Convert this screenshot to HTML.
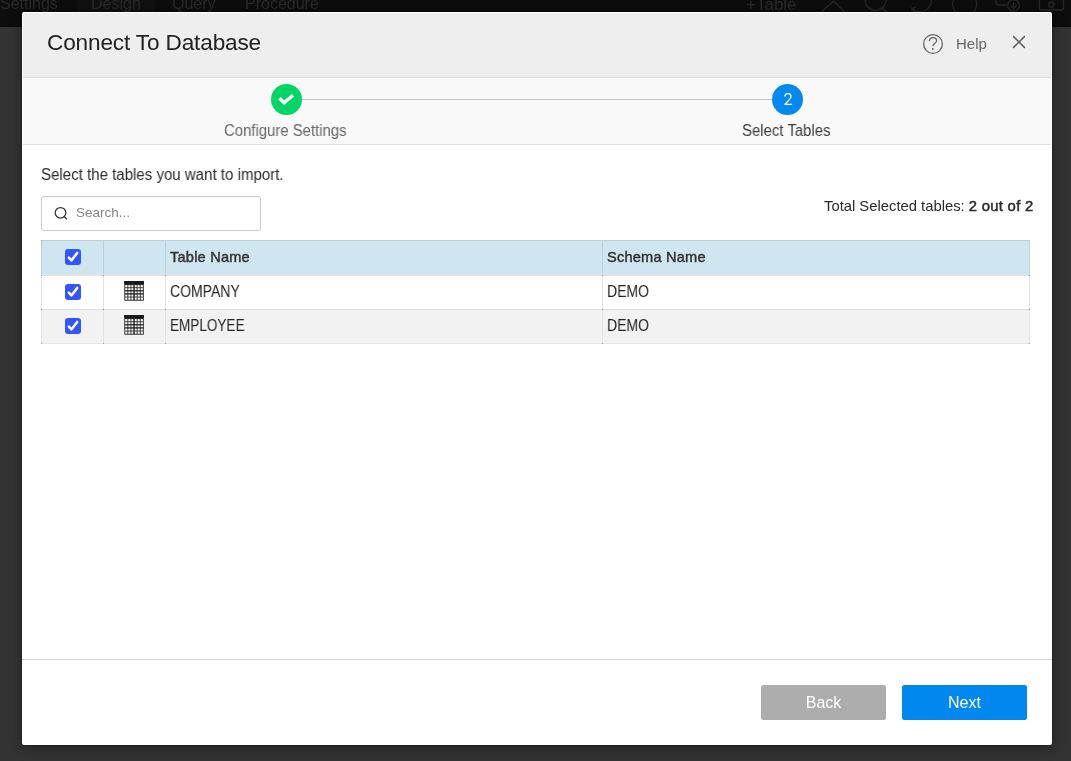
<!DOCTYPE html>
<html><head><meta charset="utf-8">
<style>
*{box-sizing:border-box;margin:0;padding:0}
html,body{width:1071px;height:761px;overflow:hidden;background:#333333;font-family:"Liberation Sans",sans-serif}
body{position:relative}
.a{position:absolute}
.t{position:absolute;white-space:nowrap;line-height:1;will-change:transform}
.tb{position:absolute;top:-4.5px;font-size:16px;line-height:1;color:#2a2a2a;white-space:nowrap}
.hl{position:absolute;height:1px}
.vl{position:absolute;width:1px}
.cb{position:absolute;width:16px;height:16px;background:#3356fc;border-radius:3px}
.cb svg{position:absolute;left:0;top:0}
.grid{position:absolute;width:21px;height:21px}
</style></head>
<body>
<!-- background app (dimmed) -->
<div class="a" style="left:0;top:0;width:1071px;height:27px;background:#0d0d0d"></div>
<div class="t tb" style="left:0px">Settings</div>
<div class="a" style="left:77px;top:0;width:78px;height:27px;background:#111"></div>
<div class="t tb" style="left:91px">Design</div>
<div class="t tb" style="left:172px">Query</div>
<div class="t tb" style="left:245px">Procedure</div>
<div class="t tb" style="left:746px;font-size:17px">+Table</div>

<svg class="a" style="left:800px;top:0" width="271" height="27" viewBox="800 0 271 27" fill="none" stroke="#282828" stroke-width="1.3">
  <path d="M821.6 11.8 L833.3 1.2 L844.8 11.8"/>
  <circle cx="875.5" cy="-0.3" r="10.6"/>
  <path d="M882.3 8.2 L888 12.5"/>
  <path d="M920 -11.5 A11.5 11.5 0 0 1 920 11.5 L913 11.5"/>
  <path d="M912 10 L915.5 6.5 M912 7 L912 10 L915 10"/>
  <path d="M955 -3 A12 12 0 1 0 975.5 -1"/>
  <path d="M996 0 L996 3 Q996 5 999 5 L1007 5"/>
  <circle cx="1013.5" cy="5.3" r="5.8"/>
  <path d="M1013.5 1.8 L1013.5 8.5 M1011 6 L1013.5 8.5 L1016 6"/>
  <path d="M1039.5 0 L1039.5 8 Q1039.5 10 1041.5 10 L1061.5 10 Q1063.5 10 1063.5 8 L1063.5 0"/>
  <circle cx="1051.3" cy="4.6" r="2.6"/>
</svg>
<!-- modal -->
<div class="a" style="left:22px;top:12px;width:1030px;height:733px;border-radius:2px;box-shadow:0 2px 14px rgba(0,0,0,.38),0 0 1px 1px rgba(0,0,0,.15)"></div>
<div class="a" style="left:22px;top:12px;width:1030px;height:733px;background:#ffffff;border-radius:2px"></div>
<!-- header -->
<div class="a" style="left:23px;top:13px;width:1028px;height:64px;background:#eeeeee"></div>
<div class="hl" style="left:23px;top:77px;width:1028px;background:#dcdcdc"></div>
<div class="t" style="left:47px;top:32.2px;font-size:22.6px;letter-spacing:-0.15px;color:#222">Connect To Database</div>
<svg class="a" style="left:922px;top:33.1px" width="22" height="22" viewBox="0 0 22 22">
  <circle cx="11" cy="11" r="9.4" fill="none" stroke="#666" stroke-width="1.3"/>
  <path d="M7.4 8.2 C7.4 5.9 9.1 4.6 11 4.6 C13 4.6 14.6 5.9 14.6 7.8 C14.6 9.9 12.1 10.3 11 12.4 L10.8 13.2" fill="none" stroke="#666" stroke-width="1.3"/>
  <circle cx="10.8" cy="16" r="0.95" fill="#666"/>
</svg>
<div class="t" style="left:955.5px;top:36.1px;font-size:15px;color:#666">Help</div>
<svg class="a" style="left:1012px;top:35px" width="14" height="14" viewBox="0 0 14 14">
  <path d="M1.6 1.6 L12.4 12.4 M12.4 1.6 L1.6 12.4" stroke="#5e5e5e" stroke-width="1.5" stroke-linecap="round"/>
</svg>

<!-- stepper -->
<div class="a" style="left:23px;top:78px;width:1028px;height:66px;background:#f9f9f9"></div>
<div class="hl" style="left:23px;top:144px;width:1028px;background:#e2e2e2"></div>
<div class="a" style="left:300px;top:99px;width:473px;height:1.2px;background:#c4c4c4"></div>
<div class="a" style="left:270.7px;top:83.9px;width:31.2px;height:31.2px;border-radius:50%;background:#00d665"></div>
<svg class="a" style="left:270.7px;top:83.9px" width="31.2" height="31.2" viewBox="0 0 31.2 31.2">
  <path d="M8.4 14.3 L13.2 18.8 L22 11.3" fill="none" stroke="#fff" stroke-width="3.4" stroke-linecap="butt" stroke-linejoin="miter"/>
</svg>
<div class="a" style="left:771.7px;top:83.9px;width:31.2px;height:31.2px;border-radius:50%;background:#0589ef"></div>
<svg class="a" style="left:771.7px;top:83.9px" width="31.2" height="31.2" viewBox="0 0 31.2 31.2"><path d="M12.9 12.4 C12.9 10.7 14.2 9.6 16 9.6 C17.8 9.6 19 10.7 19 12.4 C19 13.4 18.5 14.3 17.6 15.4 L13 20.3 L20.1 20.3" fill="none" stroke="#fff" stroke-width="1.25" stroke-linejoin="round"/></svg>
<div class="t" style="left:224.2px;top:122.7px;font-size:15.6px;color:#666;transform:scaleX(0.955);transform-origin:0 0">Configure Settings</div>
<div class="t" style="left:742.2px;top:122.7px;font-size:15.6px;color:#3c3c3c;transform:scaleX(0.957);transform-origin:0 0">Select Tables</div>

<!-- body -->
<div class="t" style="left:40.6px;top:166.9px;font-size:15.6px;color:#2a2a2a;transform:scaleX(0.965);transform-origin:0 0">Select the tables you want to import.</div>
<div class="a" style="left:41px;top:196px;width:220px;height:35px;border:1px solid #c9c9c9;border-radius:3px;background:#fff"></div>
<svg class="a" style="left:53px;top:205px" width="16" height="16" viewBox="0 0 16 16">
  <circle cx="7.5" cy="7.8" r="5.3" fill="none" stroke="#333" stroke-width="1.25"/>
  <path d="M11.4 11.7 L13.6 13.9" stroke="#333" stroke-width="1.3" stroke-linecap="round"/>
</svg>
<div class="t" style="left:75.8px;top:206.3px;font-size:13.5px;color:#858585">Search...</div>
<div class="t" style="right:38px;top:199.2px;font-size:14.8px;color:#2a2a2a">Total Selected tables: <span style="-webkit-text-stroke:0.5px #2a2a2a;letter-spacing:0.3px">2 out of 2</span></div>

<!-- table -->
<div class="a" style="left:41px;top:240px;width:989px;height:35px;background:#cfe5ef"></div>
<div class="a" style="left:41px;top:275px;width:989px;height:34px;background:#ffffff"></div>
<div class="a" style="left:41px;top:309px;width:989px;height:34px;background:#f2f2f2"></div>
<div class="hl" style="left:41px;top:240px;width:989px;background:#bccfd8"></div>
<div class="a" style="left:41px;top:274px;width:989px;height:2px;background:#e2e2e2"></div>
<div class="hl" style="left:41px;top:309px;width:989px;background:#dedede"></div>
<div class="hl" style="left:41px;top:343px;width:989px;background:#e2e2e2"></div>
<div class="vl" style="left:41px;top:240px;height:34px;background:#bdd0d9"></div>
<div class="vl" style="left:103px;top:240px;height:34px;background:#bdd0d9"></div>
<div class="vl" style="left:165px;top:240px;height:34px;background:#bdd0d9"></div>
<div class="vl" style="left:602px;top:240px;height:34px;background:#bdd0d9"></div>
<div class="vl" style="left:1029px;top:240px;height:34px;background:#bdd0d9"></div>
<div class="vl" style="left:41px;top:276px;height:68px;background:#e2e2e2"></div>
<div class="vl" style="left:103px;top:276px;height:68px;background:#e2e2e2"></div>
<div class="vl" style="left:165px;top:276px;height:68px;background:#e2e2e2"></div>
<div class="vl" style="left:602px;top:276px;height:68px;background:#e2e2e2"></div>
<div class="vl" style="left:1029px;top:276px;height:68px;background:#e2e2e2"></div>
<div class="a" style="left:41px;top:240px;width:1px;height:1px;background:#9fb2bb"></div>
<div class="a" style="left:41px;top:275px;width:1px;height:1px;background:#888"></div>
<div class="a" style="left:41px;top:309px;width:1px;height:1px;background:#888"></div>
<div class="a" style="left:41px;top:343px;width:1px;height:1px;background:#aaa"></div>
<div class="a" style="left:103px;top:275px;width:1px;height:1px;background:#888"></div>
<div class="a" style="left:103px;top:309px;width:1px;height:1px;background:#888"></div>
<div class="a" style="left:103px;top:343px;width:1px;height:1px;background:#aaa"></div>
<div class="a" style="left:165px;top:275px;width:1px;height:1px;background:#888"></div>
<div class="a" style="left:165px;top:309px;width:1px;height:1px;background:#888"></div>
<div class="a" style="left:165px;top:343px;width:1px;height:1px;background:#aaa"></div>
<div class="a" style="left:602px;top:275px;width:1px;height:1px;background:#888"></div>
<div class="a" style="left:602px;top:309px;width:1px;height:1px;background:#888"></div>
<div class="a" style="left:602px;top:343px;width:1px;height:1px;background:#aaa"></div>
<div class="a" style="left:1029px;top:275px;width:1px;height:1px;background:#888"></div>
<div class="a" style="left:1029px;top:309px;width:1px;height:1px;background:#888"></div>
<div class="a" style="left:1029px;top:343px;width:1px;height:1px;background:#aaa"></div>

<div class="cb" style="left:65px;top:249px"><svg width="16" height="16" viewBox="0 0 16 16"><path d="M3.9 8.7 L6.4 11.4 L12.2 3.9" fill="none" stroke="#fff" stroke-width="2.5" stroke-linecap="round" stroke-linejoin="round"/></svg></div>
<div class="cb" style="left:65px;top:284px"><svg width="16" height="16" viewBox="0 0 16 16"><path d="M3.9 8.7 L6.4 11.4 L12.2 3.9" fill="none" stroke="#fff" stroke-width="2.5" stroke-linecap="round" stroke-linejoin="round"/></svg></div>
<div class="cb" style="left:65px;top:318px"><svg width="16" height="16" viewBox="0 0 16 16"><path d="M3.9 8.7 L6.4 11.4 L12.2 3.9" fill="none" stroke="#fff" stroke-width="2.5" stroke-linecap="round" stroke-linejoin="round"/></svg></div>


<svg class="a" style="left:124.3px;top:280.5px" width="20.2" height="20" viewBox="0 0 20.2 20"><rect x="0" y="0" width="20.2" height="20" rx="1.3" fill="#808080"/><rect x="0.7" y="0" width="18.8" height="19.3" fill="#2e2e2e"/><rect x="0" y="0" width="20.2" height="3.3" rx="1" fill="#1a1a1a"/><g fill="#fff"><rect x="1.20" y="4.10" width="2.2" height="2.2"/><rect x="4.30" y="4.10" width="2.2" height="2.2"/><rect x="7.40" y="4.10" width="2.2" height="2.2"/><rect x="10.50" y="4.10" width="2.2" height="2.2"/><rect x="13.60" y="4.10" width="2.2" height="2.2"/><rect x="16.70" y="4.10" width="2.2" height="2.2"/><rect x="1.20" y="7.20" width="2.2" height="2.2"/><rect x="4.30" y="7.20" width="2.2" height="2.2"/><rect x="7.40" y="7.20" width="2.2" height="2.2"/><rect x="10.50" y="7.20" width="2.2" height="2.2"/><rect x="13.60" y="7.20" width="2.2" height="2.2"/><rect x="16.70" y="7.20" width="2.2" height="2.2"/><rect x="1.20" y="10.30" width="2.2" height="2.2"/><rect x="4.30" y="10.30" width="2.2" height="2.2"/><rect x="7.40" y="10.30" width="2.2" height="2.2"/><rect x="10.50" y="10.30" width="2.2" height="2.2"/><rect x="13.60" y="10.30" width="2.2" height="2.2"/><rect x="16.70" y="10.30" width="2.2" height="2.2"/><rect x="1.20" y="13.40" width="2.2" height="2.2"/><rect x="4.30" y="13.40" width="2.2" height="2.2"/><rect x="7.40" y="13.40" width="2.2" height="2.2"/><rect x="10.50" y="13.40" width="2.2" height="2.2"/><rect x="13.60" y="13.40" width="2.2" height="2.2"/><rect x="16.70" y="13.40" width="2.2" height="2.2"/><rect x="1.20" y="16.50" width="2.2" height="2.2"/><rect x="4.30" y="16.50" width="2.2" height="2.2"/><rect x="7.40" y="16.50" width="2.2" height="2.2"/><rect x="10.50" y="16.50" width="2.2" height="2.2"/><rect x="13.60" y="16.50" width="2.2" height="2.2"/><rect x="16.70" y="16.50" width="2.2" height="2.2"/></g><rect x="9.6" y="3.3" width="0.9" height="16" fill="#141414"/><rect x="0.7" y="9.4" width="18.8" height="0.8" fill="#141414"/><rect x="0.7" y="12.5" width="18.8" height="0.8" fill="#141414"/></svg>
<svg class="a" style="left:124.3px;top:314.5px" width="20.2" height="20" viewBox="0 0 20.2 20"><rect x="0" y="0" width="20.2" height="20" rx="1.3" fill="#808080"/><rect x="0.7" y="0" width="18.8" height="19.3" fill="#2e2e2e"/><rect x="0" y="0" width="20.2" height="3.3" rx="1" fill="#1a1a1a"/><g fill="#fff"><rect x="1.20" y="4.10" width="2.2" height="2.2"/><rect x="4.30" y="4.10" width="2.2" height="2.2"/><rect x="7.40" y="4.10" width="2.2" height="2.2"/><rect x="10.50" y="4.10" width="2.2" height="2.2"/><rect x="13.60" y="4.10" width="2.2" height="2.2"/><rect x="16.70" y="4.10" width="2.2" height="2.2"/><rect x="1.20" y="7.20" width="2.2" height="2.2"/><rect x="4.30" y="7.20" width="2.2" height="2.2"/><rect x="7.40" y="7.20" width="2.2" height="2.2"/><rect x="10.50" y="7.20" width="2.2" height="2.2"/><rect x="13.60" y="7.20" width="2.2" height="2.2"/><rect x="16.70" y="7.20" width="2.2" height="2.2"/><rect x="1.20" y="10.30" width="2.2" height="2.2"/><rect x="4.30" y="10.30" width="2.2" height="2.2"/><rect x="7.40" y="10.30" width="2.2" height="2.2"/><rect x="10.50" y="10.30" width="2.2" height="2.2"/><rect x="13.60" y="10.30" width="2.2" height="2.2"/><rect x="16.70" y="10.30" width="2.2" height="2.2"/><rect x="1.20" y="13.40" width="2.2" height="2.2"/><rect x="4.30" y="13.40" width="2.2" height="2.2"/><rect x="7.40" y="13.40" width="2.2" height="2.2"/><rect x="10.50" y="13.40" width="2.2" height="2.2"/><rect x="13.60" y="13.40" width="2.2" height="2.2"/><rect x="16.70" y="13.40" width="2.2" height="2.2"/><rect x="1.20" y="16.50" width="2.2" height="2.2"/><rect x="4.30" y="16.50" width="2.2" height="2.2"/><rect x="7.40" y="16.50" width="2.2" height="2.2"/><rect x="10.50" y="16.50" width="2.2" height="2.2"/><rect x="13.60" y="16.50" width="2.2" height="2.2"/><rect x="16.70" y="16.50" width="2.2" height="2.2"/></g><rect x="9.6" y="3.3" width="0.9" height="16" fill="#141414"/><rect x="0.7" y="9.4" width="18.8" height="0.8" fill="#141414"/><rect x="0.7" y="12.5" width="18.8" height="0.8" fill="#141414"/></svg>
<div class="t" style="left:169.5px;top:249.7px;font-size:14.6px;color:#333;-webkit-text-stroke:0.45px #333;letter-spacing:0.2px">Table Name</div>
<div class="t" style="left:606.5px;top:249.7px;font-size:14.6px;color:#333;-webkit-text-stroke:0.45px #333;letter-spacing:0.2px">Schema Name</div>
<div class="t" style="left:169.6px;top:283.6px;font-size:15.8px;color:#222;transform:scaleX(0.886);transform-origin:0 0">COMPANY</div>
<div class="t" style="left:606.6px;top:283.6px;font-size:15.8px;color:#222;transform:scaleX(0.886);transform-origin:0 0">DEMO</div>
<div class="t" style="left:169.6px;top:317.8px;font-size:15.8px;color:#222;transform:scaleX(0.857);transform-origin:0 0">EMPLOYEE</div>
<div class="t" style="left:606.6px;top:317.8px;font-size:15.8px;color:#222;transform:scaleX(0.886);transform-origin:0 0">DEMO</div>

<!-- footer -->
<div class="hl" style="left:22px;top:659px;width:1030px;background:#d2d2d2"></div>
<div class="a" style="left:761px;top:685px;width:125px;height:35px;border-radius:2.5px;background:#adadad"></div>
<div class="t" style="left:761px;width:125px;text-align:center;top:694.5px;font-size:16px;color:#fff">Back</div>
<div class="a" style="left:902px;top:685px;width:125px;height:35px;border-radius:2.5px;background:#0088ef"></div>
<div class="t" style="left:902px;width:125px;text-align:center;top:694.5px;font-size:16px;color:#fff">Next</div>
</body></html>
